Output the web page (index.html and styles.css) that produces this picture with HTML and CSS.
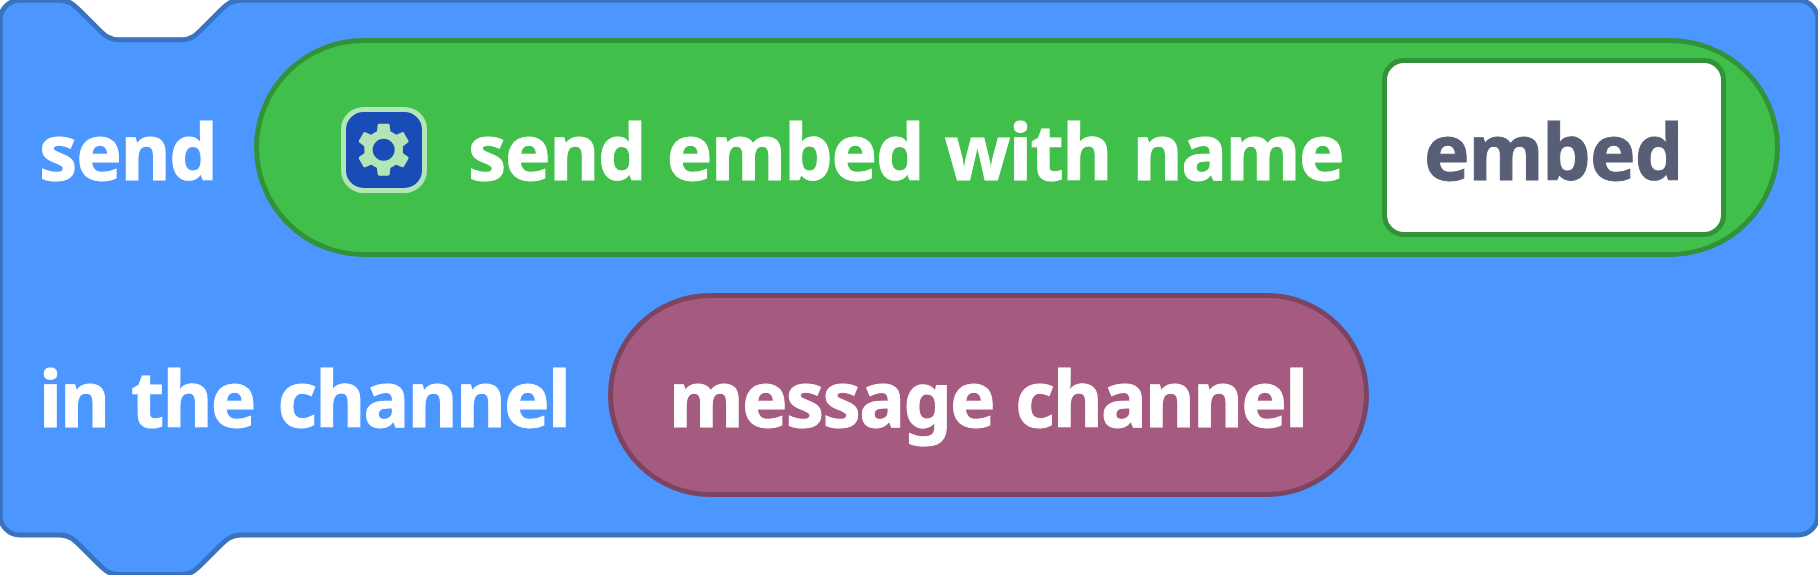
FILE: index.html
```html
<!DOCTYPE html>
<html lang="en">
<head>
<meta charset="utf-8">
<title>Send embed block</title>
<link rel="stylesheet" href="styles.css">
</head>
<body>
<main class="block">
  <svg class="block-shape" viewBox="0 0 1818 575" aria-hidden="true">
    <path d="M0.2 20A19.8 19.8 0 0 1 20 .2H59.5C69.300 .2 74.300 5.100 79.200 10L99 29.800C103.900 34.700 108.900 39.700 118.800 39.700H181.500C191.300 39.700 196.300 34.700 201.200 29.800L221 10C225.900 5.100 230.900 .2 240.800 .2H1798A19.8 19.8 0 0 1 1817.800 20V515.200A19.8 19.8 0 0 1 1798 535H240.800C230.900 535 225.900 539.900 221 544.800L201.200 564.600C196.300 569.500 191.300 574.500 181.500 574.500H118.800C108.900 574.500 103.900 569.500 99 564.600L79.200 544.800C74.300 539.900 69.300 535 59.500 535H20A19.8 19.8 0 0 1 .2 515.200Z"/>
  </svg>
  <div class="row row-send">
    <span class="label send">send</span>
    <div class="pill embed-block">
      <span class="mutator">
        <svg class="gear" viewBox="-80 -80 160 160" aria-hidden="true">
          <defs><path id="tooth" d="M-27 -48L-22 -53Q-20 -54 -20 -57L-18 -74Q-17 -78 -13 -78H13Q17 -78 18 -74L20 -57Q20 -54 22 -53L27 -48Z"/></defs>
          <circle r="45.500"/>
          <use href="#tooth"/><use href="#tooth" transform="rotate(60)"/><use href="#tooth" transform="rotate(120)"/><use href="#tooth" transform="rotate(180)"/><use href="#tooth" transform="rotate(240)"/><use href="#tooth" transform="rotate(300)"/>
        </svg>
      </span>
      <span class="label name">send embed with name</span>
      <div class="field"><span class="label value">embed</span></div>
    </div>
  </div>
  <div class="row row-channel">
    <span class="label channel">in the channel</span>
    <div class="pill message-block"><span class="label message">message channel</span></div>
  </div>
</main>
</body>
</html>
```
FILE: styles.css
```css
* { box-sizing: border-box; }
body { margin: 0; background: #fff; overflow: hidden; }
.block {
  position: relative;
  width: 1818px;
  height: 575px;
  padding-top: 38px;
  font: bold 76.500px/100px "Noto Sans", "Open Sans", sans-serif;
  color: #fff;
}
.block-shape { position: absolute; inset: 0; width: 100%; height: 100%; z-index: -1; }
.block-shape path { fill: #4c97ff; stroke: #3973c0; stroke-width: 4.940px; }
.row { display: flex; }
.row-send { height: 219px; margin-bottom: 36px; padding-left: 39px; }
.row-channel { height: 204px; padding-left: 39px; }
.label { display: block; flex: none; white-space: nowrap; -webkit-text-stroke: 1px currentColor; }
.pill { display: flex; flex: none; border: 5px solid; }
.send { width: 215px; padding-top: 62px; letter-spacing: -1.200px; }
.channel { width: 569px; padding-top: 54px; letter-spacing: -1.600px; word-spacing: 4.400px; }
.embed-block { width: 1526px; height: 219px; border-color: #31923a; border-radius: 110px; background: #40bf4a; padding-left: 82px; }
.mutator {
  display: flex; flex: none; align-items: center; justify-content: center;
  width: 85.500px; height: 85.500px; margin-top: 64px;
  border: 5px solid #b3e5b7; border-radius: 22.500px; background: #1a4cb7;
}
.gear { display: block; width: 53.330px; height: 53.330px; fill: #b3e5b7; }
.gear circle { fill: none; stroke: #b3e5b7; stroke-width: 25px; }
.name { width: 914px; margin-left: 41.500px; padding-top: 57px; letter-spacing: -1.300px; word-spacing: 3.300px; }
.field { width: 343.500px; height: 179px; margin-top: 15px; border: 5px solid #31923a; border-radius: 22px; background: #fff; color: #575e75; padding: 37px 0 0 37px; }
.value { letter-spacing: -0.900px; }
.message-block { width: 761px; height: 204px; border-color: #7c4460; border-radius: 102px; background: #a55b80; padding: 49px 0 0 56px; }
.message { letter-spacing: -1.700px; word-spacing: 3px; }
```
